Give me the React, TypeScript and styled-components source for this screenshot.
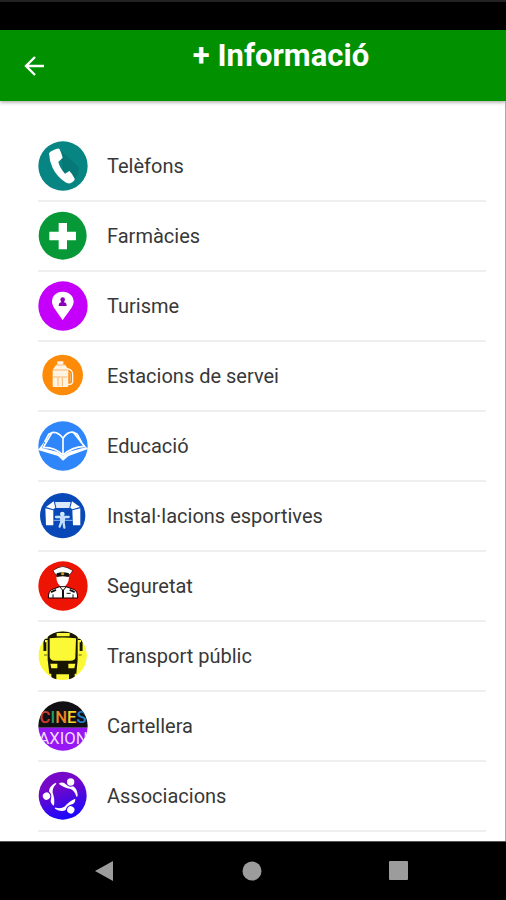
import React from 'react';
import styled, { createGlobalStyle } from 'styled-components';

const GlobalStyle = createGlobalStyle`
  * { box-sizing: border-box; }
  body { margin: 0; background: #fff; font-family: Roboto, 'Liberation Sans', sans-serif; }
`;

const Screen = styled.div`
  display: flex;
  flex-direction: column;
  min-height: 100vh;
  background: #fff;
`;

const StatusBar = styled.div`
  height: 30px;
  background: #000;
  border-top: 2px solid #232325;
`;

const AppBar = styled.header`
  display: grid;
  grid-template-columns: 68px 1fr;
  height: 71px;
  background: #009000;
  color: #fff;
  box-shadow: 0 1px 4px rgba(0, 0, 0, 0.4);
`;

const BackButton = styled.button`
  display: flex;
  align-items: center;
  justify-content: center;
  padding: 0;
  border: 0;
  background: none;
  color: inherit;
  cursor: pointer;
`;

const Title = styled.h1`
  margin: 0;
  padding: 8px 12px 0 0;
  font-size: 31px;
  line-height: 36px;
  font-weight: 700;
  text-align: center;
`;

const Content = styled.main`
  flex: 1;
  padding: 31px 19px 7px 38px;
  border-right: 1px solid #a8a8a8;
`;

const List = styled.ul`
  margin: 0;
  padding: 0;
  list-style: none;
`;

const Item = styled.li`
  border-bottom: 2px solid #efefef;
  height: 70px;
`;

const ItemLink = styled.a`
  display: flex;
  align-items: center;
  gap: 19px;
  height: 100%;
  color: #383838;
  font-size: 20px;
  line-height: 24px;
  text-decoration: none;
`;

const Badge = styled.svg`
  flex: none;
  width: 50px;
  height: 50px;
`;

const NavBar = styled.nav`
  display: grid;
  grid-template-columns: repeat(3, 1fr);
  height: 59px;
  padding: 0 34px 0 32px;
  background: #000;
  border-top: 1px solid #555;
`;

const NavButton = styled.button`
  display: flex;
  align-items: center;
  justify-content: center;
  padding: 0;
  border: 0;
  background: none;
  color: #9c9c9c;
  cursor: pointer;
`;

const PhoneIcon = () => (
  <>
    <circle cx="75" cy="75" r="74" fill="#078583" />
    <path d="M69 30 L120 75 Q126 100 108 118 L75 92Z" fill="#067976" />
    <path
      d="M33 37Q36 31 47 27Q58 21 64 23Q70 34 74 50L61 63Q66 82 81 98L94 90Q104 99 110 113Q111 119 100 125Q92 130 82 124Q56 106 44 81Q34 60 33 37Z"
      fill="#fff"
    />
  </>
);

const PharmacyIcon = () => (
  <>
    <circle cx="74" cy="74" r="72" fill="#079838" />
    <path d="M62 36h25v26h27v26H87v27H62V88H34V62h28z" fill="#fff" />
  </>
);

const TourismIcon = () => (
  <>
    <circle cx="75" cy="75" r="74" fill="#c400fb" />
    <path d="M74 32C54 32 42 45 42 62C42 78 60 94 74 118C88 94 107 78 107 62C107 45 94 32 74 32Z" fill="#fff" />
    <circle cx="74" cy="56" r="7" fill="#8a00b8" />
    <path d="M70 59h8v5q8 1 8 11H62q0-10 8-11z" fill="#8a00b8" />
  </>
);

const StationIcon = () => (
  <>
    <circle cx="74" cy="72" r="61" fill="#fd8b07" />
    <path d="M58 31h18v10h5l10 14v50q0 3-4 3H47q-3 0-3-3V57l10-15h4z" fill="#fff4e4" />
    <path d="M55 42h25 M45 57h44 M46 78h42 M60 80v26 M73 80v26" stroke="#fcb469" strokeWidth="3" fill="none" />
    <path d="M88 53q15 3 16 16v24q-2 8-14 7" stroke="#fff4e4" strokeWidth="4" fill="none" />
    <path d="M93 64q4 3 4 10v18" stroke="#fed9ae" strokeWidth="2" fill="none" />
  </>
);

const EducationIcon = () => (
  <>
    <circle cx="75" cy="75" r="74" fill="#2f86fb" />
    <path d="M20 61L0 87L60 105L75 119L92 105L150 84L128 60L143 79L93 92L75 104L57 92L12 81Z" fill="#fff" />
    <g fill="none" stroke="#fff" strokeWidth="5" strokeLinejoin="round">
      <path d="M75 52Q59 31 42 35L16 79Q50 78 75 102Q101 78 139 76L106 34Q89 31 75 52V102" />
      <path d="M42 35L32 40L20 63M106 34L118 40L131 64" />
    </g>
  </>
);

const SportIcon = () => (
  <>
    <circle cx="74" cy="74" r="68" fill="#0849b7" />
    <g fill="#fff">
      <path d="M22 52L46 58V103H24Z" />
      <path d="M127 52L103 58L105 103H127Z" />
      <path d="M24 48L47 31L52 50L46 55Z" />
      <path d="M126 48L102 31L97 50L103 55Z" />
    </g>
    <path d="M51 33H98L94 51H55Z" fill="#dce9fc" />
    <circle cx="73" cy="69" r="7" fill="#d6eaff" />
    <path d="M65 76H83L80 94H67Z" fill="#c4dffc" />
    <path d="M54 78H92M71 90L65 107M76 90L79 110" fill="none" stroke="#c4dffc" strokeWidth="7" strokeLinecap="round" />
    <path d="M46 88H66M81 88H104" stroke="#8fbaf5" strokeWidth="3" />
  </>
);

const SecurityIcon = () => (
  <>
    <circle cx="75" cy="75" r="74" fill="#ee1403" />
    <path d="M45 28L60 20Q74 13 88 20L104 28Q102 37 93 42H56Q47 37 45 28Z" fill="#fff" stroke="#160000" strokeWidth="2" />
    <path d="M55 47Q74 43 93 47Q92 66 83 73V82H65V73Q56 66 55 47Z" fill="#fff" />
    <path d="M56 37Q74 31 93 37L92 48Q74 43 56 48Z" fill="#111" />
    <circle cx="74" cy="38" r="5" fill="#c59d25" />
    <path d="M31 111Q31 91 41 86L65 77H84L109 86Q119 91 119 111Z" fill="#fff" stroke="#170000" strokeWidth="3" />
    <path d="M65 77L75 89L85 77" fill="none" stroke="#170000" strokeWidth="3" />
    <path d="M72 86H78V111H72ZM38 91L53 84L55 89L40 96ZM96 84L111 91L109 96L94 89Z" fill="#111" />
    <path d="M45 100V111M105 100V111M86 97H98" stroke="#111" strokeWidth="3" />
  </>
);

const BusIcon = () => (
  <>
    <clipPath id="bus-disc"><circle cx="74" cy="74" r="73" /></clipPath>
    <g clipPath="url(#bus-disc)">
      <circle cx="74" cy="74" r="73" fill="#fbf935" />
      <path d="M36 5Q74-3 114 5L119 18V86L115 128H110V150H93V130H55V150H40V128H34L29 86V18Z" fill="#171600" />
      <path d="M56 6H95V16H56Z" fill="#fbf935" />
      <path d="M35 22Q74 17 114 22L112 81Q109 89 98 89H50Q37 89 35 78Z" fill="#fbf935" />
      <path d="M37 98H58V112H40ZM112 98H91V112H109Z" fill="#fbf935" />
      <path d="M30 25H19V60M119 25H131V60" fill="none" stroke="#171600" strokeWidth="4" />
      <path d="M21 34V60M129 34V60" stroke="#171600" strokeWidth="8" />
      <path d="M18 72H28M122 72H131" stroke="#171600" strokeWidth="2" />
    </g>
  </>
);

const CinemaText = styled.text`
  font-family: Roboto, 'Liberation Sans', sans-serif;
  font-size: 50px;
  text-anchor: middle;
`;

const CinemaIcon = () => (
  <>
    <clipPath id="cinema-disc"><circle cx="75" cy="75" r="74" /></clipPath>
    <g clipPath="url(#cinema-disc)">
      <path d="M0 0H150V80H0Z" fill="#111014" />
      <path d="M0 80H150V150H0Z" fill="#9617f3" />
      <CinemaText x="75" y="66" fontWeight="500">
        <tspan fill="#c8402f">C</tspan>
        <tspan fill="#2a9a66">I</tspan>
        <tspan fill="#ef8526">N</tspan>
        <tspan fill="#f2d22d">E</tspan>
        <tspan fill="#2380c7">S</tspan>
      </CinemaText>
      <CinemaText x="75" y="130" fill="#f1d9ff">AXION</CinemaText>
    </g>
  </>
);

const Member = () => (
  <>
    <circle cx="98" cy="33" r="11" />
    <path d="M62 38Q74 30 85 41Q93 50 106 46Q119 54 119 76L115 77Q111 60 98 54Q76 50 62 38Z" />
  </>
);

const AssociationIcon = () => (
  <>
    <linearGradient id="association-fill" x1="0.3" y1="0" x2="0.6" y2="1">
      <stop offset="0.3" stopColor="#7608c8" />
      <stop offset="1" stopColor="#1608ff" />
    </linearGradient>
    <circle cx="74" cy="74" r="72" fill="url(#association-fill)" />
    <g fill="#fff">
      <Member />
      <g transform="rotate(120 74 75)"><Member /></g>
      <g transform="rotate(240 74 75)"><Member /></g>
    </g>
  </>
);

const items = [
  { id: 'telefons', label: 'Telèfons', Icon: PhoneIcon },
  { id: 'farmacies', label: 'Farmàcies', Icon: PharmacyIcon },
  { id: 'turisme', label: 'Turisme', Icon: TourismIcon },
  { id: 'estacions', label: 'Estacions de servei', Icon: StationIcon },
  { id: 'educacio', label: 'Educació', Icon: EducationIcon },
  { id: 'esports', label: 'Instal·lacions esportives', Icon: SportIcon },
  { id: 'seguretat', label: 'Seguretat', Icon: SecurityIcon },
  { id: 'transport', label: 'Transport públic', Icon: BusIcon },
  { id: 'cartellera', label: 'Cartellera', Icon: CinemaIcon },
  { id: 'associacions', label: 'Associacions', Icon: AssociationIcon },
];

export default function App() {
  return (
    <Screen>
      <GlobalStyle />
      <StatusBar />
      <AppBar>
        <BackButton aria-label="Enrere">
          <svg width="20" height="20" viewBox="0 0 20 20" fill="none" stroke="currentColor" strokeWidth="2.4">
            <path d="M11 1L2 10L11 19M2 10H20" />
          </svg>
        </BackButton>
        <Title>+ Informació</Title>
      </AppBar>
      <Content>
        <List>
          {items.map(({ id, label, Icon }) => (
            <Item key={id}>
              <ItemLink href={`#${id}`}>
                <Badge viewBox="0 0 150 150" aria-hidden="true"><Icon /></Badge>
                {label}
              </ItemLink>
            </Item>
          ))}
        </List>
      </Content>
      <NavBar>
        <NavButton aria-label="Torna">
          <svg width="20" height="22" viewBox="0 0 20 22"><path d="M18 1V21L0 11Z" fill="currentColor" /></svg>
        </NavButton>
        <NavButton aria-label="Inici">
          <svg width="20" height="20" viewBox="0 0 20 20"><circle cx="10" cy="10" r="9.5" fill="currentColor" /></svg>
        </NavButton>
        <NavButton aria-label="Recents">
          <svg width="20" height="20" viewBox="0 0 20 20"><rect width="19" height="19" rx="1" fill="currentColor" /></svg>
        </NavButton>
      </NavBar>
    </Screen>
  );
}
